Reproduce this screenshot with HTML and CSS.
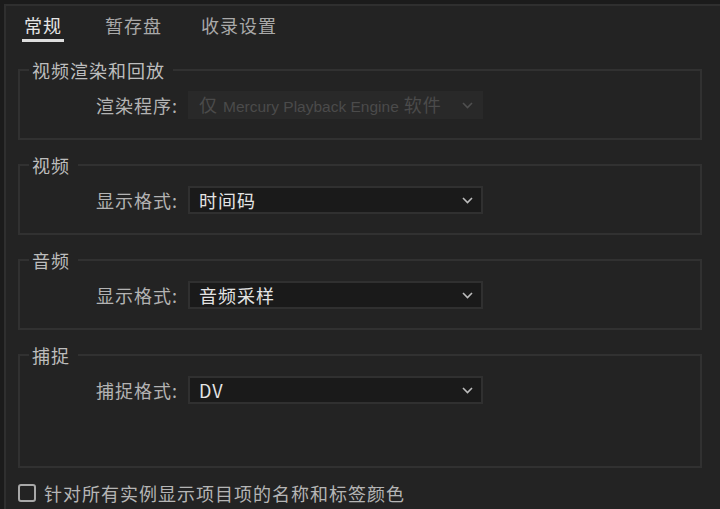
FILE: index.html
```html
<!DOCTYPE html>
<html lang="zh-CN">
<head>
<meta charset="utf-8">
<link rel="stylesheet" href="styles.css">
</head>
<body>
<div class="panel">
  <div class="tabs">
    <div class="tab active">常规</div>
    <div class="tab">暂存盘</div>
    <div class="tab">收录设置</div>
  </div>

  <fieldset class="group">
    <legend>视频渲染和回放</legend>
    <div class="row">
      <span class="label">渲染程序:</span>
      <div class="select disabled">
        <span class="value">仅 <span class="latin">Mercury Playback Engine</span> 软件</span>
        <svg class="chev" width="11" height="7" viewBox="0 0 11 7"><path d="M1 1 L5.5 5.5 L10 1" fill="none" stroke="currentColor" stroke-width="1.6"/></svg>
      </div>
    </div>
  </fieldset>

  <fieldset class="group">
    <legend>视频</legend>
    <div class="row">
      <span class="label">显示格式:</span>
      <div class="select">
        <span class="value">时间码</span>
        <svg class="chev" width="11" height="7" viewBox="0 0 11 7"><path d="M1 1 L5.5 5.5 L10 1" fill="none" stroke="currentColor" stroke-width="1.6"/></svg>
      </div>
    </div>
  </fieldset>

  <fieldset class="group">
    <legend>音频</legend>
    <div class="row">
      <span class="label">显示格式:</span>
      <div class="select">
        <span class="value">音频采样</span>
        <svg class="chev" width="11" height="7" viewBox="0 0 11 7"><path d="M1 1 L5.5 5.5 L10 1" fill="none" stroke="currentColor" stroke-width="1.6"/></svg>
      </div>
    </div>
  </fieldset>

  <fieldset class="group tall">
    <legend>捕捉</legend>
    <div class="row">
      <span class="label">捕捉格式:</span>
      <div class="select">
        <span class="value">DV</span>
        <svg class="chev" width="11" height="7" viewBox="0 0 11 7"><path d="M1 1 L5.5 5.5 L10 1" fill="none" stroke="currentColor" stroke-width="1.6"/></svg>
      </div>
    </div>
  </fieldset>

  <label class="check">
    <span class="box"></span>
    <span class="check-text">针对所有实例显示项目项的名称和标签颜色</span>
  </label>
</div>
</body>
</html>
```

FILE: styles.css
```css
html, body {
  margin: 0;
  padding: 0;
  background: #1b1b1b;
  height: 100%;
  overflow: hidden;
}

body {
  font-family: "Noto Sans CJK SC", "Noto Sans", sans-serif;
  font-size: 18px;
  letter-spacing: 1px;
  color: #b8b8b8;
}

.panel {
  margin: 4px 0 0 4px;
  height: 505px;
  box-sizing: border-box;
  background: #232323;
  border-top: 2px solid #2f2f2f;
  border-left: 2px solid #2f2f2f;
  padding: 0 18px 0 12px;
}

.tabs {
  display: flex;
  padding-top: 7px;
  padding-left: 4px;
}

.tab {
  line-height: 24px;
  padding: 0 2px 2px 2px;
  border-bottom: 3px solid transparent;
  color: #a9a9a9;
  margin-right: 35px;
}

.tab:first-child {
  margin-right: 39px;
}

.tab.active {
  color: #e6e6e6;
  border-bottom-color: #dedede;
}

.group {
  margin: 15px 0 0 0;
  padding: 0 0 19px 0;
  border: 2px solid #313131;
  min-inline-size: 0;
}

.tabs + .group {
  margin-top: 18px;
}

.group.tall {
  padding-bottom: 62px;
}

.group legend {
  margin-left: 9px;
  padding: 0 8px 0 3px;
  line-height: 20px;
  color: #bdbdbd;
}

.row {
  display: flex;
  align-items: center;
  margin-top: 11px;
}

.label {
  width: 158px;
  margin-right: 10px;
  text-align: right;
  color: #b3b3b3;
}

.select {
  width: 295px;
  height: 28px;
  box-sizing: border-box;
  display: flex;
  align-items: center;
  justify-content: space-between;
  padding: 0 8px 0 9px;
  background: #1a1a1a;
  border: 2px solid #303030;
  color: #e4e4e4;
}

.select .value {
  line-height: 24px;
  white-space: nowrap;
}

.select .latin {
  font-family: "Liberation Sans", "Noto Sans", sans-serif;
  font-size: 15.5px;
  letter-spacing: 0;
}

.select .chev {
  color: #bcbcbc;
  margin-top: 1px;
  flex: none;
}

.select.disabled {
  background: #292929;
  border-color: #292929;
  color: #4b4b4b;
}

.select.disabled .chev {
  color: #4f4f4f;
}

.check {
  display: flex;
  align-items: center;
  gap: 8px;
  margin-top: 15px;
}

.check .box {
  width: 18px;
  height: 18px;
  box-sizing: border-box;
  border: 2px solid #a8a8a8;
  border-radius: 3px;
}

.check-text {
  color: #b5b5b5;
  line-height: 20px;
}
```
